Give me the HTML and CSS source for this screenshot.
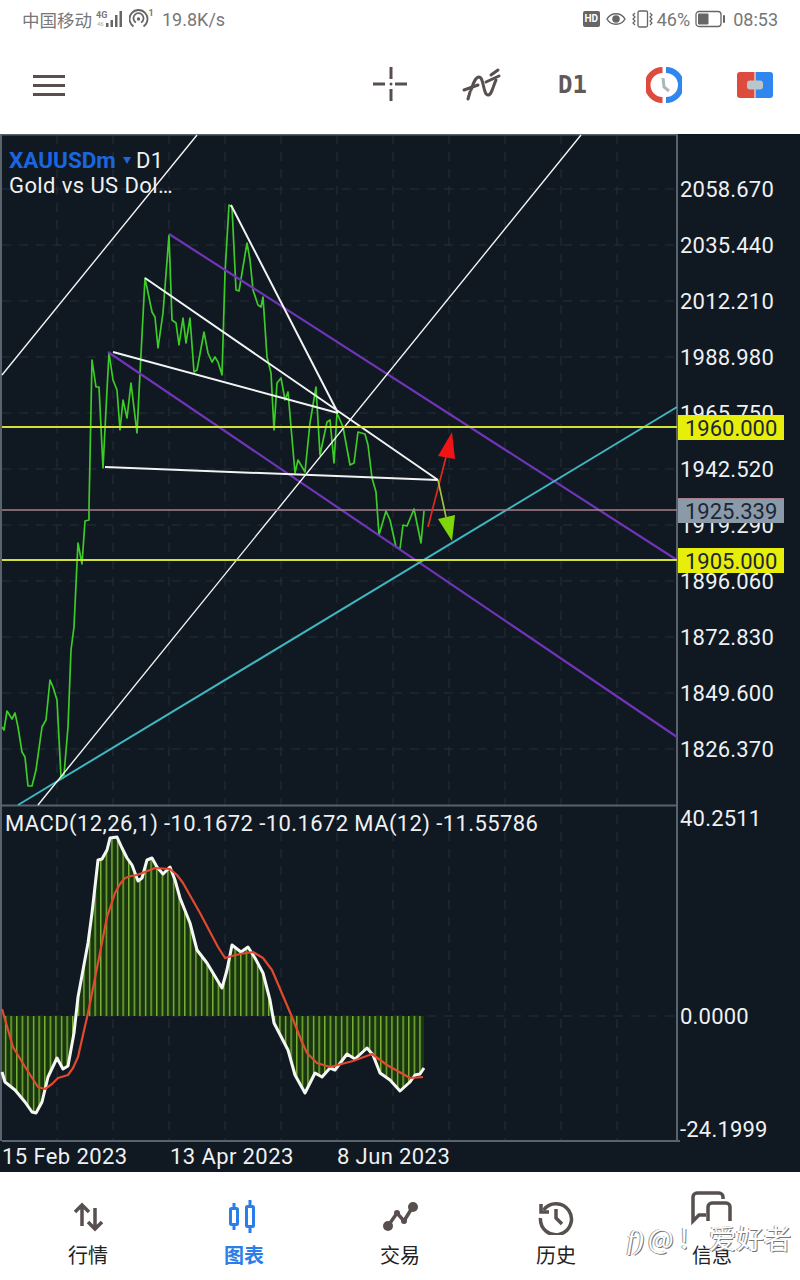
FILE: index.html
```html
<!DOCTYPE html>
<html lang="zh-CN">
<head>
    <meta charset="UTF-8">
    <meta name="viewport" content="width=device-width, initial-scale=1.0">
    <title>XAUUSDm D1</title>
    <link rel="stylesheet" href="styles.css">
</head>
<body>
    <div class="status-bar">
        <span class="status-text carrier">中国移动</span>
        <svg class="ic-signal" width="28" height="20" viewBox="0 0 28 20">
            <text x="0" y="9" class="net-label">4G</text>
            <text x="1" y="17" class="net-sub">46</text>
            <path d="M10 14h2.500v4h-2.500zM14.500 11h2.500v7h-2.500zM19 6h2.500v12h-2.500zM23.500 2h2.500v16h-2.500z" fill="#666"/>
        </svg>
        <svg class="ic-hotspot" width="24" height="20" viewBox="0 0 24 20">
            <path d="M4.500 17.500a9 9 0 1 1 10 0M7 13.500a5 5 0 1 1 5 0" fill="none" stroke="#666" stroke-width="1.800"/>
            <circle cx="9.500" cy="10" r="1.700" fill="#666"/>
            <text x="19.500" y="7" class="net-label">1</text>
        </svg>
        <span class="status-text speed">19.8K/s</span>
        <div class="status-right">
            <span class="hd-badge">HD</span>
            <svg width="20" height="14" viewBox="0 0 20 14">
                <path d="M1 7c4-7 14-7 18 0c-4 7-14 7-18 0z" fill="none" stroke="#666" stroke-width="1.500"/>
                <circle cx="10" cy="7" r="3.800" fill="#666"/>
            </svg>
            <svg class="ic-vibrate" width="21" height="18" viewBox="0 0 21 18">
                <rect x="6" y="1" width="9.500" height="16" rx="1.500" fill="none" stroke="#666" stroke-width="1.300"/>
                <path d="M3 3l-2 2l2 2l-2 2l2 2l-2 2l2 2M18 3l2 2l-2 2l2 2l-2 2l2 2l-2 2" fill="none" stroke="#666" stroke-width="1.200"/>
            </svg>
            <span class="status-text pct">46%</span>
            <svg class="ic-battery" width="31" height="18" viewBox="0 0 31 18">
                <rect x="1" y="1.500" width="25" height="15" rx="3" fill="none" stroke="#666" stroke-width="1.300"/>
                <rect x="3" y="3.500" width="10.500" height="11" rx="1" fill="#666"/>
                <rect x="28" y="5" width="2" height="8" rx="1" fill="#666"/>
            </svg>
            <span class="status-text time">08:53</span>
        </div>
    </div>

    <div class="toolbar">
        <div class="menu-btn"><span></span><span></span><span></span></div>
        <div class="tools">
            <div class="tool">
                <svg width="36" height="36" viewBox="0 0 36 36">
                    <path d="M18 0v12M18 22v12M0 17h12M22 17h12" stroke="#57504f" stroke-width="3" fill="none"/>
                    <circle cx="18" cy="17" r="1.500" fill="#57504f"/>
                </svg>
            </div>
            <div class="tool">
                <svg width="40" height="36" viewBox="0 0 40 36" fill="none" stroke="#57504f" stroke-width="3" stroke-linecap="round">
                    <path d="M9 23C12 14 14 10 17 10C22 10 21 28 26 28C30 28 31 19 34 13"/>
                    <path d="M2 23L16 18M24 15L37 9M6 32L8 25M29 8L36 3"/>
                </svg>
            </div>
            <div class="tool period">D1</div>
            <div class="tool">
                <svg width="36" height="36" viewBox="0 0 36 36" fill="none">
                    <path d="M16.500 3a15 15 0 0 0 0 30" stroke="#dd4b3e" stroke-width="6"/>
                    <path d="M20 3a15 15 0 0 1 0 30" stroke="#2f86ee" stroke-width="6"/>
                    <path d="M17 11l1 9l5 4" stroke="#aab8bc" stroke-width="3"/>
                </svg>
            </div>
            <div class="tool">
                <svg width="36" height="26" viewBox="0 0 36 26">
                    <path d="M3 0h14.500v26h-14.500a3 3 0 0 1-3-3v-20a3 3 0 0 1 3-3z" fill="#dd4b3e"/>
                    <path d="M18.500 0h14.500a3 3 0 0 1 3 3v20a3 3 0 0 1-3 3h-14.500z" fill="#2f86ee"/>
                    <rect x="10" y="8.500" width="16" height="9" rx="3" fill="#b9c6ca"/>
                </svg>
            </div>
        </div>
    </div>

    <svg class="chart" width="800" height="1038" viewBox="0 134 800 1038">
        <defs>
            <pattern id="histBars" patternUnits="userSpaceOnUse" x="3" y="0" width="5.600" height="10">
                <rect width="5.600" height="10" fill="#1a3610"/>
                <rect x="2" width="1.200" height="10" fill="#8ccb3e"/>
            </pattern>
        </defs>

        <!-- grid -->
        <path class="grid" d="M57 135V1141M113 135V1141M169 135V1141M225 135V1141M281 135V1141M337 135V1141M393 135V1141M449 135V1141M505 135V1141M561 135V1141M617 135V1141"/>
        <path class="grid" d="M2 189H677M2 245H677M2 301H677M2 357H677M2 413H677M2 469H677M2 525H677M2 581H677M2 637H677M2 693H677M2 749H677M2 1016H677"/>

        <!-- frame -->
        <path class="frame" d="M1 134V1141M0 134.500H678M677 134V1141M2 805.500H677M2 1141H680"/>

        <!-- price -->
        <polyline class="price" points="2,727 4,730 7,711 12,719 15,713 18,727 22,752 25,757 28,786 32,786 36,770 42,727 46,720 50,680 53,687 57,700 61,777 64,775 68,727 71,650 74,627 77,563 78,543 82,564 85,521 89,520 89,507 92,360 96,387 99,387 103,468 107,390 109,353 113,380 117,390 120,430 123,400 127,418 131,383 137,433 140,373 145,278 152,312 155,317 158,348 163,313 169,235 172,320 176,323 179,345 183,318 186,343 190,318 194,372 197,370 204,332 208,353 212,362 215,357 218,362 222,375 225,273 229,205 232,207 236,290 239,291 247,243 250,260 253,290 258,305 261,307 263,297 267,357 271,373 274,430 277,383 281,378 285,400 288,392 295,473 298,460 305,472 310,423 316,387 320,455 327,422 330,420 334,463 337,413 343,427 350,465 354,463 358,432 365,434 368,445 372,478 376,492 379,535 386,511 390,520 396,547 400,549 403,525 407,526 414,509 421,543 424,511"/>

        <!-- drawn objects -->
        <path class="line-purple" d="M169 234L677 560M108 352L677 737"/>
        <path class="line-teal" d="M18 805L677 407"/>
        <path class="line-white" d="M2 375L197 135M38 805L581 135"/>
        <path class="line-white thick" d="M231 205L338 413M145 278L438 480M113 352L338 413M105 467L438 480"/>
        <path class="line-yellow" d="M2 427H677M2 560H677"/>
        <path class="line-pink" d="M2 510H677"/>
        <path class="arrow-red" d="M428 527L446 457"/>
        <polygon points="452,432 438,456 455,459" fill="#f01414"/>
        <path class="arrow-green" d="M438 480L446 517"/>
        <polygon points="438,519 455,515 452,541" fill="#7fd60a"/>

        <!-- macd -->
        <polygon fill="url(#histBars)" points="2,1016 2,1072 5,1082 15,1090 25,1102 32,1112 36,1113 42,1102 48,1077 57,1058 63,1069 68,1066 74,1033 78,997 88,943 92,913 98,860 102,859 107,850 110,838 117,837 122,848 127,858 132,865 138,881 142,878 147,860 152,858 157,867 163,874 170,867 175,880 180,898 190,923 197,950 207,963 222,988 227,970 232,945 241,952 248,947 255,958 263,973 270,1000 274,1023 288,1050 295,1075 305,1093 315,1073 322,1077 330,1068 335,1070 347,1054 355,1059 367,1048 373,1055 380,1073 390,1080 400,1091 410,1082 415,1075 420,1074 424,1068 424,1016"/>
        <polyline class="macd-line" points="2,1072 5,1082 15,1090 25,1102 32,1112 36,1113 42,1102 48,1077 57,1058 63,1069 68,1066 74,1033 78,997 88,943 92,913 98,860 102,859 107,850 110,838 117,837 122,848 127,858 132,865 138,881 142,878 147,860 152,858 157,867 163,874 170,867 175,880 180,898 190,923 197,950 207,963 222,988 227,970 232,945 241,952 248,947 255,958 263,973 270,1000 274,1023 288,1050 295,1075 305,1093 315,1073 322,1077 330,1068 335,1070 347,1054 355,1059 367,1048 373,1055 380,1073 390,1080 400,1091 410,1082 415,1075 420,1074 424,1068"/>
        <polyline class="signal-line" points="2,1009 13,1047 27,1070 38,1087 45,1089 52,1084 58,1078 68,1075 73,1068 78,1057 88,1013 98,963 107,917 115,893 120,884 125,878 131,876 137,875 155,868 170,869 177,875 183,883 200,913 218,947 225,958 232,956 240,954 253,952 263,958 272,970 292,1017 302,1042 307,1053 317,1063 330,1067 353,1061 372,1054 387,1065 410,1078 423,1077"/>

        <!-- price axis -->
        <text class="axis" x="680" y="197">2058.670</text>
        <text class="axis" x="680" y="253">2035.440</text>
        <text class="axis" x="680" y="309">2012.210</text>
        <text class="axis" x="680" y="365">1988.980</text>
        <text class="axis" x="680" y="421">1965.750</text>
        <text class="axis" x="680" y="477">1942.520</text>
        <text class="axis" x="680" y="533">1919.290</text>
        <text class="axis" x="680" y="589">1896.060</text>
        <text class="axis" x="680" y="645">1872.830</text>
        <text class="axis" x="680" y="701">1849.600</text>
        <text class="axis" x="680" y="757">1826.370</text>
        <text class="axis" x="680" y="826">40.2511</text>
        <text class="axis" x="680" y="1024">0.0000</text>
        <text class="axis" x="680" y="1137">-24.1999</text>

        <!-- price tags -->
        <rect class="tag-yellow" x="678" y="415" width="106" height="25"/>
        <text class="tag-text" x="685" y="436">1960.000</text>
        <rect class="tag-yellow" x="678" y="548" width="106" height="25"/>
        <text class="tag-text" x="685" y="569">1905.000</text>
        <rect class="tag-gray" x="678" y="498" width="106" height="25"/>
        <rect class="tag-gray-top" x="678" y="498" width="106" height="1"/>
        <text class="tag-text" x="685" y="519">1925.339</text>

        <!-- symbol -->
        <text class="symbol" x="9" y="168">XAUUSDm</text>
        <polygon points="123,157 131,157 127,164" fill="#1a66e0"/>
        <text class="legend" x="136" y="168">D1</text>
        <text class="legend" x="9" y="193">Gold vs US Dol…</text>
        <text class="legend" x="5" y="831">MACD(12,26,1) -10.1672 -10.1672 MA(12) -11.55786</text>

        <!-- dates -->
        <text class="legend" x="2" y="1164">15 Feb 2023</text>
        <text class="legend" x="170" y="1164">13 Apr 2023</text>
        <text class="legend" x="337" y="1164">8 Jun 2023</text>
    </svg>

    <div class="tabbar">
        <div class="tab">
            <svg class="tab-icon" width="36" height="36" viewBox="0 0 36 36" fill="none" stroke="#57504f" stroke-width="3.500">
                <path d="M12 27V7M5 13l7-7l7 7"/>
                <path d="M25 9V29M18 23l7 7l7-7"/>
            </svg>
            <span class="tab-label">行情</span>
        </div>
        <div class="tab active">
            <svg class="tab-icon" width="36" height="36" viewBox="0 0 36 36" fill="none" stroke="#2b7de9" stroke-width="3">
                <rect x="4.500" y="9.500" width="7" height="16" rx="1"/>
                <path d="M8 4v5M8 26v5"/>
                <rect x="20.500" y="7.500" width="7" height="20" rx="1"/>
                <path d="M24 1v6M24 28v6"/>
            </svg>
            <span class="tab-label">图表</span>
        </div>
        <div class="tab">
            <svg class="tab-icon" width="36" height="36" viewBox="0 0 36 36" fill="none">
                <path d="M6 27L15 14L22 22L30 9" stroke="#57504f" stroke-width="3.500"/>
                <circle cx="6" cy="27" r="5" fill="#57504f"/>
                <circle cx="15" cy="14" r="3" fill="#57504f"/>
                <circle cx="22" cy="22" r="3" fill="#57504f"/>
                <circle cx="31" cy="8" r="5" fill="#57504f"/>
            </svg>
            <span class="tab-label">交易</span>
        </div>
        <div class="tab">
            <svg class="tab-icon" width="36" height="36" viewBox="0 0 36 36" fill="none" stroke="#57504f" stroke-width="3.500">
                <path d="M5.500 11a15.500 15.500 0 1 1-3 8"/>
                <path d="M3 5v8h8"/>
                <path d="M18 10v9l6 6"/>
            </svg>
            <span class="tab-label">历史</span>
        </div>
        <div class="tab">
            <svg class="tab-icon msg" width="44" height="36" viewBox="0 0 44 36" fill="none" stroke="#57504f" stroke-width="3.500">
                <path d="M33 8V6a4 4 0 0 0-4-4H7a4 4 0 0 0-4 4v24l6-6h7"/>
                <path d="M22 12h14a4 4 0 0 1 4 4v14M22 12a4 4 0 0 0-4 4v14"/>
            </svg>
            <span class="tab-label">信息</span>
        </div>
        <div class="watermark"><i>f)</i><span class="wm-at">@</span><span class="wm-bar">!</span>爱好者</div>
    </div>
</body>
</html>
```

FILE: styles.css
```css
html, body {
    margin: 0;
    padding: 0;
}
body {
    width: 800px;
    height: 1280px;
    overflow: hidden;
    background: #fff;
    font-family: Roboto, "Noto Sans CJK SC", sans-serif;
}

/* status bar */
.status-bar {
    height: 38px;
    display: flex;
    align-items: center;
    padding: 0 22px;
    box-sizing: border-box;
}
.status-text {
    font-size: 18px;
    color: #777;
}
.carrier {
    font-size: 17.500px;
}
.net-label {
    font-size: 9px;
    font-weight: bold;
    fill: #777;
}
.net-sub {
    font-size: 6px;
    fill: #aaa;
}
.ic-signal {
    margin-left: 4px;
}
.ic-hotspot {
    margin-left: 5px;
}
.speed {
    margin-left: 9px;
}
.status-right {
    margin-left: auto;
    display: flex;
    align-items: center;
    gap: 6px;
}
.hd-badge {
    width: 17px;
    height: 16px;
    border-radius: 2px;
    background: #666;
    color: #fff;
    font-size: 10px;
    font-weight: bold;
    line-height: 16px;
    text-align: center;
}
.pct {
    margin-left: -2px;
}
.ic-battery {
    margin-left: -1px;
}
.time {
    margin-left: 1px;
}

/* top toolbar */
.toolbar {
    height: 96px;
    display: flex;
    align-items: center;
    justify-content: space-between;
    padding: 0 0 2px 33px;
    box-sizing: border-box;
}
.menu-btn {
    width: 32px;
    display: flex;
    flex-direction: column;
    gap: 6px;
}
.menu-btn span {
    height: 3px;
    background: #57504f;
}
.tools {
    display: flex;
}
.tool {
    width: 91px;
    display: flex;
    justify-content: center;
    align-items: center;
}
.period {
    font-size: 24px;
    font-weight: bold;
    color: #5f5958;
    font-family: "DejaVu Sans Mono", Roboto, sans-serif;
}

/* chart */
.chart {
    display: block;
    background: #101821;
}
.grid {
    stroke: #262f39;
    stroke-width: 1;
    stroke-dasharray: 9 8;
    fill: none;
}
.frame {
    stroke: #59636d;
    stroke-width: 2;
    fill: none;
}
.price {
    fill: none;
    stroke: #3ccb27;
    stroke-width: 1.700;
    stroke-linejoin: round;
}
.line-purple {
    stroke: #6f35b8;
    stroke-width: 2.200;
}
.line-teal {
    stroke: #3fb6c0;
    stroke-width: 2;
}
.line-white {
    stroke: #f2f4f4;
    stroke-width: 1.400;
}
.line-white.thick {
    stroke-width: 2;
}
.line-yellow {
    stroke: #d4e03a;
    stroke-width: 2;
}
.line-pink {
    stroke: #a77f8c;
    stroke-width: 1.400;
}
.arrow-red {
    stroke: #e02820;
    stroke-width: 1.700;
}
.arrow-green {
    stroke: #a3c23c;
    stroke-width: 1.700;
}
.macd-line {
    fill: none;
    stroke: #f5f7f5;
    stroke-width: 3;
    stroke-linejoin: round;
}
.signal-line {
    fill: none;
    stroke: #e2492f;
    stroke-width: 2.200;
    stroke-linejoin: round;
}
.axis, .legend {
    font-size: 22px;
    fill: #eef1f3;
}
.axis {
    letter-spacing: 0.2px;
}
.legend {
    letter-spacing: 0.400px;
}
.symbol {
    font-size: 22.500px;
    font-weight: bold;
    fill: #1a66e0;
}
.tag-yellow {
    fill: #e6ee0a;
}
.tag-gray {
    fill: #8b9aa8;
}
.tag-gray-top {
    fill: #a77f8c;
}
.tag-text {
    font-size: 22px;
    fill: #1c2736;
}

/* bottom tabs */
.tabbar {
    position: relative;
    height: 108px;
    display: flex;
    padding: 0 10px;
    box-sizing: border-box;
}
.tab {
    width: 156px;
    padding-top: 27px;
    display: flex;
    flex-direction: column;
    align-items: center;
    box-sizing: border-box;
}
.tab-icon {
    height: 36px;
}
.msg {
    margin-top: -8px;
    margin-bottom: 8px;
}
.tab-label {
    margin-top: 6px;
    font-size: 20px;
    line-height: 28px;
    color: #222;
    font-family: "Noto Sans CJK SC", sans-serif;
}
.active .tab-label {
    color: #2b7de9;
    font-weight: bold;
}
.watermark {
    position: absolute;
    left: 627px;
    top: 47px;
    font-size: 27.500px;
    line-height: 36px;
    color: #fff;
    white-space: nowrap;
    font-family: "Noto Sans CJK SC", sans-serif;
    text-shadow: 1px 1px 0 #777, -1px 0 0 #999;
}
.watermark i {
    font-family: "Liberation Serif", serif;
}
.wm-at {
    margin-left: 4px;
}
.wm-bar {
    margin: 0 20px 0 6px;
}
```
